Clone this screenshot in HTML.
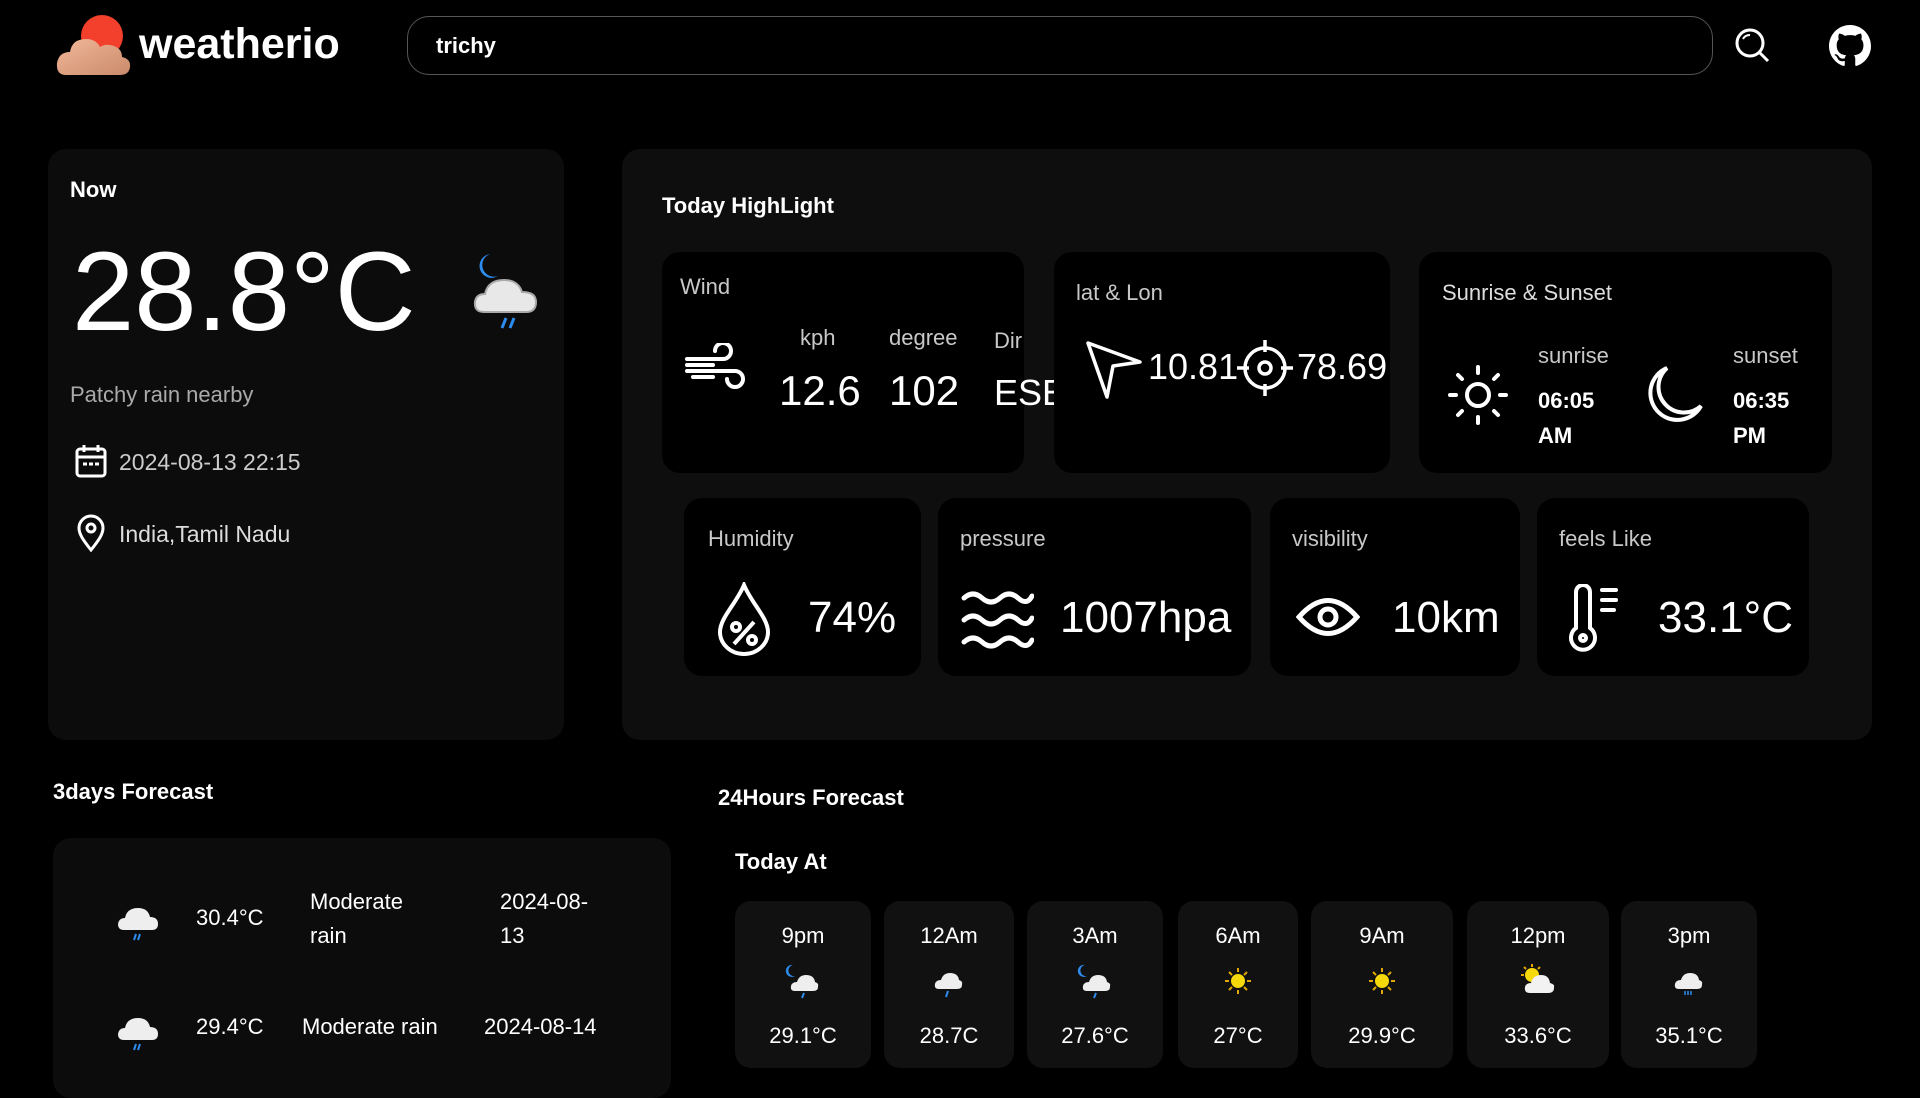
<!DOCTYPE html>
<html><head><meta charset="utf-8"><style>
*{margin:0;padding:0;box-sizing:border-box}
body{width:1920px;height:1080px;overflow:hidden;background:#000;color:#fff;font-family:"Liberation Sans",sans-serif;position:relative}
.a{position:absolute;white-space:nowrap}
.card{position:absolute;border-radius:18px}
.lbl{color:#c8c8c8;font-size:22px}
.val{font-size:42px}
.big{font-size:44px}
.hc{position:absolute;top:901px;height:167px;background:#111;border-radius:16px;text-align:center;font-size:22px}
.hc .t{position:absolute;top:22px;width:100%}
.hc .tp{position:absolute;top:122px;width:100%}
.hc svg{position:absolute;top:62px;left:50%;margin-left:-18px}
</style></head><body>
<svg class="a" style="left:56px;top:15px" width="76" height="62" viewBox="0 0 76 62">
<defs><linearGradient id="cg" x1="0" y1="0" x2="1" y2="1"><stop offset="0" stop-color="#f2b89a"/><stop offset="1" stop-color="#c98a6a"/></linearGradient></defs>
<circle cx="46" cy="21" r="21" fill="#f2402c"/>
<path d="M10 60 Q0 60 1 48 Q3 37 14 37 Q16 24 30 24 Q40 24 44 32 Q50 28 58 31 Q66 34 66 42 Q75 44 74 52 Q73 60 64 60 Z" fill="url(#cg)"/>
</svg>
<div class="a" style="left:139px;top:20px;font-size:43px;font-weight:bold">weatherio</div>
<div class="a" style="left:407px;top:16px;width:1306px;height:59px;border:1px solid #555;border-radius:22px"></div>
<div class="a" style="left:436px;top:33px;font-size:22px;font-weight:bold">trichy</div>
<svg class="a" style="left:1733px;top:26px" width="38" height="38" viewBox="0 0 38 38" fill="none" stroke="#fff" stroke-width="3"><circle cx="17" cy="17" r="13"/><path d="M26.5 26.5 L35 35"/><path d="M10 13 Q12 9 17 9" stroke-width="2"/></svg>
<svg class="a" style="left:1829px;top:25px" width="42" height="42" viewBox="0 0 16 16"><path fill="#fff" d="M8 0C3.58 0 0 3.58 0 8c0 3.54 2.29 6.53 5.47 7.59.4.07.55-.17.55-.38 0-.19-.01-.82-.01-1.49-2.01.37-2.53-.49-2.69-.94-.09-.23-.48-.94-.82-1.13-.28-.15-.68-.52-.01-.53.63-.01 1.08.58 1.23.82.72 1.21 1.87.87 2.33.66.07-.52.28-.87.51-1.07-1.78-.2-3.64-.89-3.64-3.95 0-.87.31-1.59.82-2.15-.08-.2-.36-1.02.08-2.12 0 0 .67-.21 2.2.82.64-.18 1.32-.27 2-.27.68 0 1.36.09 2 .27 1.53-1.04 2.2-.82 2.2-.82.44 1.1.16 1.92.08 2.12.51.56.82 1.27.82 2.15 0 3.07-1.87 3.75-3.65 3.95.29.25.54.73.54 1.48 0 1.07-.01 1.93-.01 2.2 0 .21.15.46.55.38A8.013 8.013 0 0016 8c0-4.42-3.58-8-8-8z"/></svg>

<div class="card" style="left:48px;top:149px;width:516px;height:591px;background:#0c0c0c"></div>
<div class="a" style="left:70px;top:177px;font-size:22px;font-weight:bold">Now</div>
<div class="a" style="left:72px;top:230px;font-size:112px;line-height:1.1">28.8°C</div>
<svg class="a" style="left:470px;top:250px" width="74" height="82" viewBox="0 0 74 82">
<path d="M20 4 A12 12 0 1 0 28 26 A10 10 0 0 1 20 4Z" fill="#2d8cf0"/>
<path d="M14 62 Q4 62 5 52 Q6 44 15 44 Q18 30 34 30 Q48 30 52 42 Q66 42 66 52 Q66 62 56 62Z" fill="#e8e8e8" stroke="#aaa" stroke-width="2"/>
<path d="M36 68 L32 78 M44 68 L40 78" stroke="#2d8cf0" stroke-width="3"/></svg>
<div class="a" style="left:70px;top:382px;font-size:22px;color:#aaa">Patchy rain nearby</div>
<svg class="a" style="left:75px;top:444px" width="32" height="34" viewBox="0 0 32 34" fill="none" stroke="#fff" stroke-width="3"><rect x="2" y="5" width="28" height="27" rx="3"/><path d="M2 13H30M9 1V8M23 1V8"/><path d="M8 20h4M14 20h4M20 20h4" stroke-width="3"/></svg>
<div class="a" style="left:119px;top:449px;font-size:23px;color:#ccc">2024-08-13 22:15</div>
<svg class="a" style="left:77px;top:514px" width="28" height="38" viewBox="0 0 28 38" fill="none" stroke="#fff" stroke-width="3"><path d="M14 36 C6 26 2 20 2 14 A12 12 0 0 1 26 14 C26 20 22 26 14 36Z"/><circle cx="14" cy="14" r="4"/></svg>
<div class="a" style="left:119px;top:521px;font-size:23px;color:#ddd">India,Tamil Nadu</div>

<div class="card" style="left:622px;top:149px;width:1250px;height:591px;background:#0e0e0e"></div>
<div class="a" style="left:662px;top:193px;font-size:22px;font-weight:bold">Today HighLight</div>

<div class="card" style="left:662px;top:252px;width:362px;height:221px;background:#000"></div>
<div class="a lbl" style="left:680px;top:274px">Wind</div>
<svg class="a" style="left:683px;top:343px" width="62" height="52" viewBox="0 0 62 52" fill="none" stroke="#fff" stroke-width="4" stroke-linecap="round"><path d="M4 16H40A8 8 0 1 0 32 8"/><path d="M4 28H52A8 8 0 1 1 44 36"/><path d="M4 22H30M10 34H30"/></svg>
<div class="a lbl" style="left:800px;top:325px">kph</div>
<div class="a lbl" style="left:889px;top:325px">degree</div>
<div class="a lbl" style="left:994px;top:328px">Dir</div>
<div class="a val" style="left:779px;top:367px">12.6</div>
<div class="a val" style="left:889px;top:367px">102</div>
<div class="a" style="left:994px;top:372px;font-size:36px">ESE</div>

<div class="card" style="left:1054px;top:252px;width:336px;height:221px;background:#000"></div>
<div class="a lbl" style="left:1076px;top:280px">lat &amp; Lon</div>
<svg class="a" style="left:1085px;top:340px" width="58" height="60" viewBox="0 0 58 60" fill="none" stroke="#fff" stroke-width="3.5" stroke-linejoin="round"><path d="M3 3 L55 22 L28 26 L22 57 Z"/></svg>
<div class="a" style="left:1148px;top:346px;font-size:36px">10.81</div>
<svg class="a" style="left:1235px;top:338px" width="60" height="60" viewBox="0 0 60 60" fill="none" stroke="#fff" stroke-width="3.5"><circle cx="30" cy="30" r="20"/><circle cx="30" cy="30" r="6"/><path d="M30 2V14M30 46V58M2 30H14M46 30H58"/></svg>
<div class="a" style="left:1297px;top:346px;font-size:36px">78.69</div>

<div class="card" style="left:1419px;top:252px;width:413px;height:221px;background:#000"></div>
<div class="a lbl" style="left:1442px;top:280px;color:#ddd">Sunrise &amp; Sunset</div>
<svg class="a" style="left:1448px;top:364px" width="60" height="62" viewBox="0 0 60 62" fill="none" stroke="#fff" stroke-width="4" stroke-linecap="round"><circle cx="30" cy="31" r="11"/><path d="M30 3V9M30 53V59M2 31H8M52 31H58M10 11L14 15M46 47L50 51M10 51L14 47M46 15L50 11"/></svg>
<div class="a lbl" style="left:1538px;top:343px">sunrise</div>
<div class="a" style="left:1538px;top:388px;font-size:22px;font-weight:bold">06:05</div>
<div class="a" style="left:1538px;top:423px;font-size:22px;font-weight:bold">AM</div>
<svg class="a" style="left:1643px;top:364px" width="62" height="62" viewBox="0 0 62 62" fill="none" stroke="#fff" stroke-width="4"><path d="M24 4 A27 27 0 1 0 58 42 A24 24 0 0 1 24 4Z"/></svg>
<div class="a lbl" style="left:1733px;top:343px">sunset</div>
<div class="a" style="left:1733px;top:388px;font-size:22px;font-weight:bold">06:35</div>
<div class="a" style="left:1733px;top:423px;font-size:22px;font-weight:bold">PM</div>

<div class="card" style="left:684px;top:498px;width:237px;height:178px;background:#000"></div>
<div class="a lbl" style="left:708px;top:526px">Humidity</div>
<svg class="a" style="left:716px;top:582px" width="56" height="74" viewBox="0 0 56 74" fill="none" stroke="#fff" stroke-width="4"><path d="M28 3 C20 22 4 36 4 50 A24 22 0 0 0 52 50 C52 36 36 22 28 3Z"/><path d="M18 62 L38 40" /><circle cx="20" cy="45" r="4"/><circle cx="36" cy="58" r="4"/></svg>
<div class="a big" style="left:808px;top:593px">74%</div>

<div class="card" style="left:938px;top:498px;width:313px;height:178px;background:#000"></div>
<div class="a lbl" style="left:960px;top:526px">pressure</div>
<svg class="a" style="left:960px;top:588px" width="74" height="64" viewBox="0 0 74 64" fill="none" stroke="#fff" stroke-width="5" stroke-linecap="round"><path d="M4 10 Q13 2 22 10 T40 10 T58 10 T72 8"/><path d="M4 32 Q13 24 22 32 T40 32 T58 32 T72 30"/><path d="M4 54 Q13 46 22 54 T40 54 T58 54 T72 52"/></svg>
<div class="a big" style="left:1060px;top:593px">1007hpa</div>

<div class="card" style="left:1270px;top:498px;width:250px;height:178px;background:#000"></div>
<div class="a lbl" style="left:1292px;top:526px">visibility</div>
<svg class="a" style="left:1296px;top:592px" width="64" height="50" viewBox="0 0 64 50" fill="none" stroke="#fff" stroke-width="5"><path d="M3 25 Q32 -8 61 25 Q32 58 3 25Z"/><circle cx="32" cy="25" r="8"/></svg>
<div class="a big" style="left:1392px;top:593px">10km</div>

<div class="card" style="left:1537px;top:498px;width:272px;height:178px;background:#000"></div>
<div class="a lbl" style="left:1559px;top:526px">feels Like</div>
<svg class="a" style="left:1562px;top:584px" width="66" height="70" viewBox="0 0 66 70" fill="none" stroke="#fff" stroke-width="4" stroke-linecap="round"><path d="M14 44V8A7 7 0 0 1 28 8V44A12 12 0 1 1 14 44Z"/><circle cx="21" cy="54" r="3"/><path d="M40 6H54M40 16H54M40 26H52"/></svg>
<div class="a big" style="left:1658px;top:593px">33.1°C</div>

<div class="a" style="left:53px;top:779px;font-size:22px;font-weight:bold">3days Forecast</div>
<div class="card" style="left:53px;top:838px;width:618px;height:260px;background:#0c0c0c"></div>
<svg class="a" style="left:116px;top:900px" width="44" height="44" viewBox="0 0 44 44"><path d="M8 30 Q2 30 2 24 Q3 18 9 18 Q11 8 22 8 Q32 8 34 17 Q42 17 42 24 Q42 30 36 30Z" fill="#eee"/><path d="M20 34L18 40M24 34L22 40" stroke="#2d8cf0" stroke-width="2"/></svg>
<div class="a" style="left:196px;top:905px;font-size:22px">30.4°C</div>
<div class="a" style="left:310px;top:885px;font-size:22px;line-height:34px">Moderate<br>rain</div>
<div class="a" style="left:500px;top:885px;font-size:22px;line-height:34px">2024-08-<br>13</div>
<svg class="a" style="left:116px;top:1010px" width="44" height="44" viewBox="0 0 44 44"><path d="M8 30 Q2 30 2 24 Q3 18 9 18 Q11 8 22 8 Q32 8 34 17 Q42 17 42 24 Q42 30 36 30Z" fill="#eee"/><path d="M20 34L18 40M24 34L22 40" stroke="#2d8cf0" stroke-width="2"/></svg>
<div class="a" style="left:196px;top:1014px;font-size:22px">29.4°C</div>
<div class="a" style="left:302px;top:1014px;font-size:22px">Moderate rain</div>
<div class="a" style="left:484px;top:1014px;font-size:22px">2024-08-14</div>

<div class="a" style="left:718px;top:785px;font-size:22px;font-weight:bold">24Hours Forecast</div>
<div class="a" style="left:735px;top:849px;font-size:22px;font-weight:bold">Today At</div>

<div class="hc" style="left:735px;width:136px"><div class="t">9pm</div><svg width="36" height="36" viewBox="0 0 36 36"><path d="M8 2A6 6 0 1 0 10 13A5 5 0 0 1 8 2Z" fill="#2d8cf0"/><path d="M10 28Q5 28 6 23Q7 19 12 19Q14 12 21 12Q29 12 30 19Q34 20 33 24Q33 28 28 28Z" fill="#eee"/><path d="M19 30L17 35" stroke="#2d8cf0" stroke-width="2"/></svg><div class="tp">29.1°C</div></div>
<div class="hc" style="left:884px;width:130px"><div class="t">12Am</div><svg width="36" height="36" viewBox="0 0 36 36"><path d="M8 26Q3 26 4 21Q5 17 10 17Q12 10 19 10Q27 10 28 17Q32 18 31 22Q31 26 26 26Z" fill="#eee"/><path d="M17 28L15 34" stroke="#2d8cf0" stroke-width="2"/></svg><div class="tp">28.7C</div></div>
<div class="hc" style="left:1027px;width:136px"><div class="t">3Am</div><svg width="36" height="36" viewBox="0 0 36 36"><path d="M8 2A6 6 0 1 0 10 13A5 5 0 0 1 8 2Z" fill="#2d8cf0"/><path d="M10 28Q5 28 6 23Q7 19 12 19Q14 12 21 12Q29 12 30 19Q34 20 33 24Q33 28 28 28Z" fill="#eee"/><path d="M19 30L17 35" stroke="#2d8cf0" stroke-width="2"/></svg><div class="tp">27.6°C</div></div>
<div class="hc" style="left:1178px;width:120px"><div class="t">6Am</div><svg width="36" height="36" viewBox="0 0 36 36"><circle cx="18" cy="18" r="7" fill="#f5d90a"/><path d="M18 5V9M18 27V31M5 18H9M27 18H31M9 9L12 12M24 24L27 27M9 27L12 24M24 12L27 9" stroke="#e0a800" stroke-width="2"/></svg><div class="tp">27°C</div></div>
<div class="hc" style="left:1311px;width:142px"><div class="t">9Am</div><svg width="36" height="36" viewBox="0 0 36 36"><circle cx="18" cy="18" r="7" fill="#f5d90a"/><path d="M18 5V9M18 27V31M5 18H9M27 18H31M9 9L12 12M24 24L27 27M9 27L12 24M24 12L27 9" stroke="#e0a800" stroke-width="2"/></svg><div class="tp">29.9°C</div></div>
<div class="hc" style="left:1467px;width:142px"><div class="t">12pm</div><svg width="36" height="36" viewBox="0 0 36 36"><circle cx="12" cy="12" r="7" fill="#f5d90a"/><path d="M12 1V4M1 12H4M4 4L6 6M20 4L18 6" stroke="#e0a800" stroke-width="2"/><path d="M10 30Q4 30 5 24Q6 20 11 20Q13 12 21 12Q29 12 30 20Q35 21 34 25Q34 30 28 30Z" fill="#f2f2f2"/></svg><div class="tp">33.6°C</div></div>
<div class="hc" style="left:1621px;width:136px"><div class="t">3pm</div><svg width="36" height="36" viewBox="0 0 36 36"><path d="M8 26Q3 26 4 21Q5 17 10 17Q12 10 19 10Q27 10 28 17Q32 18 31 22Q31 26 26 26Z" fill="#eee"/><path d="M14 28V32M17 28V32M20 28V32" stroke="#2d8cf0" stroke-width="1.5"/></svg><div class="tp">35.1°C</div></div>
</body></html>
